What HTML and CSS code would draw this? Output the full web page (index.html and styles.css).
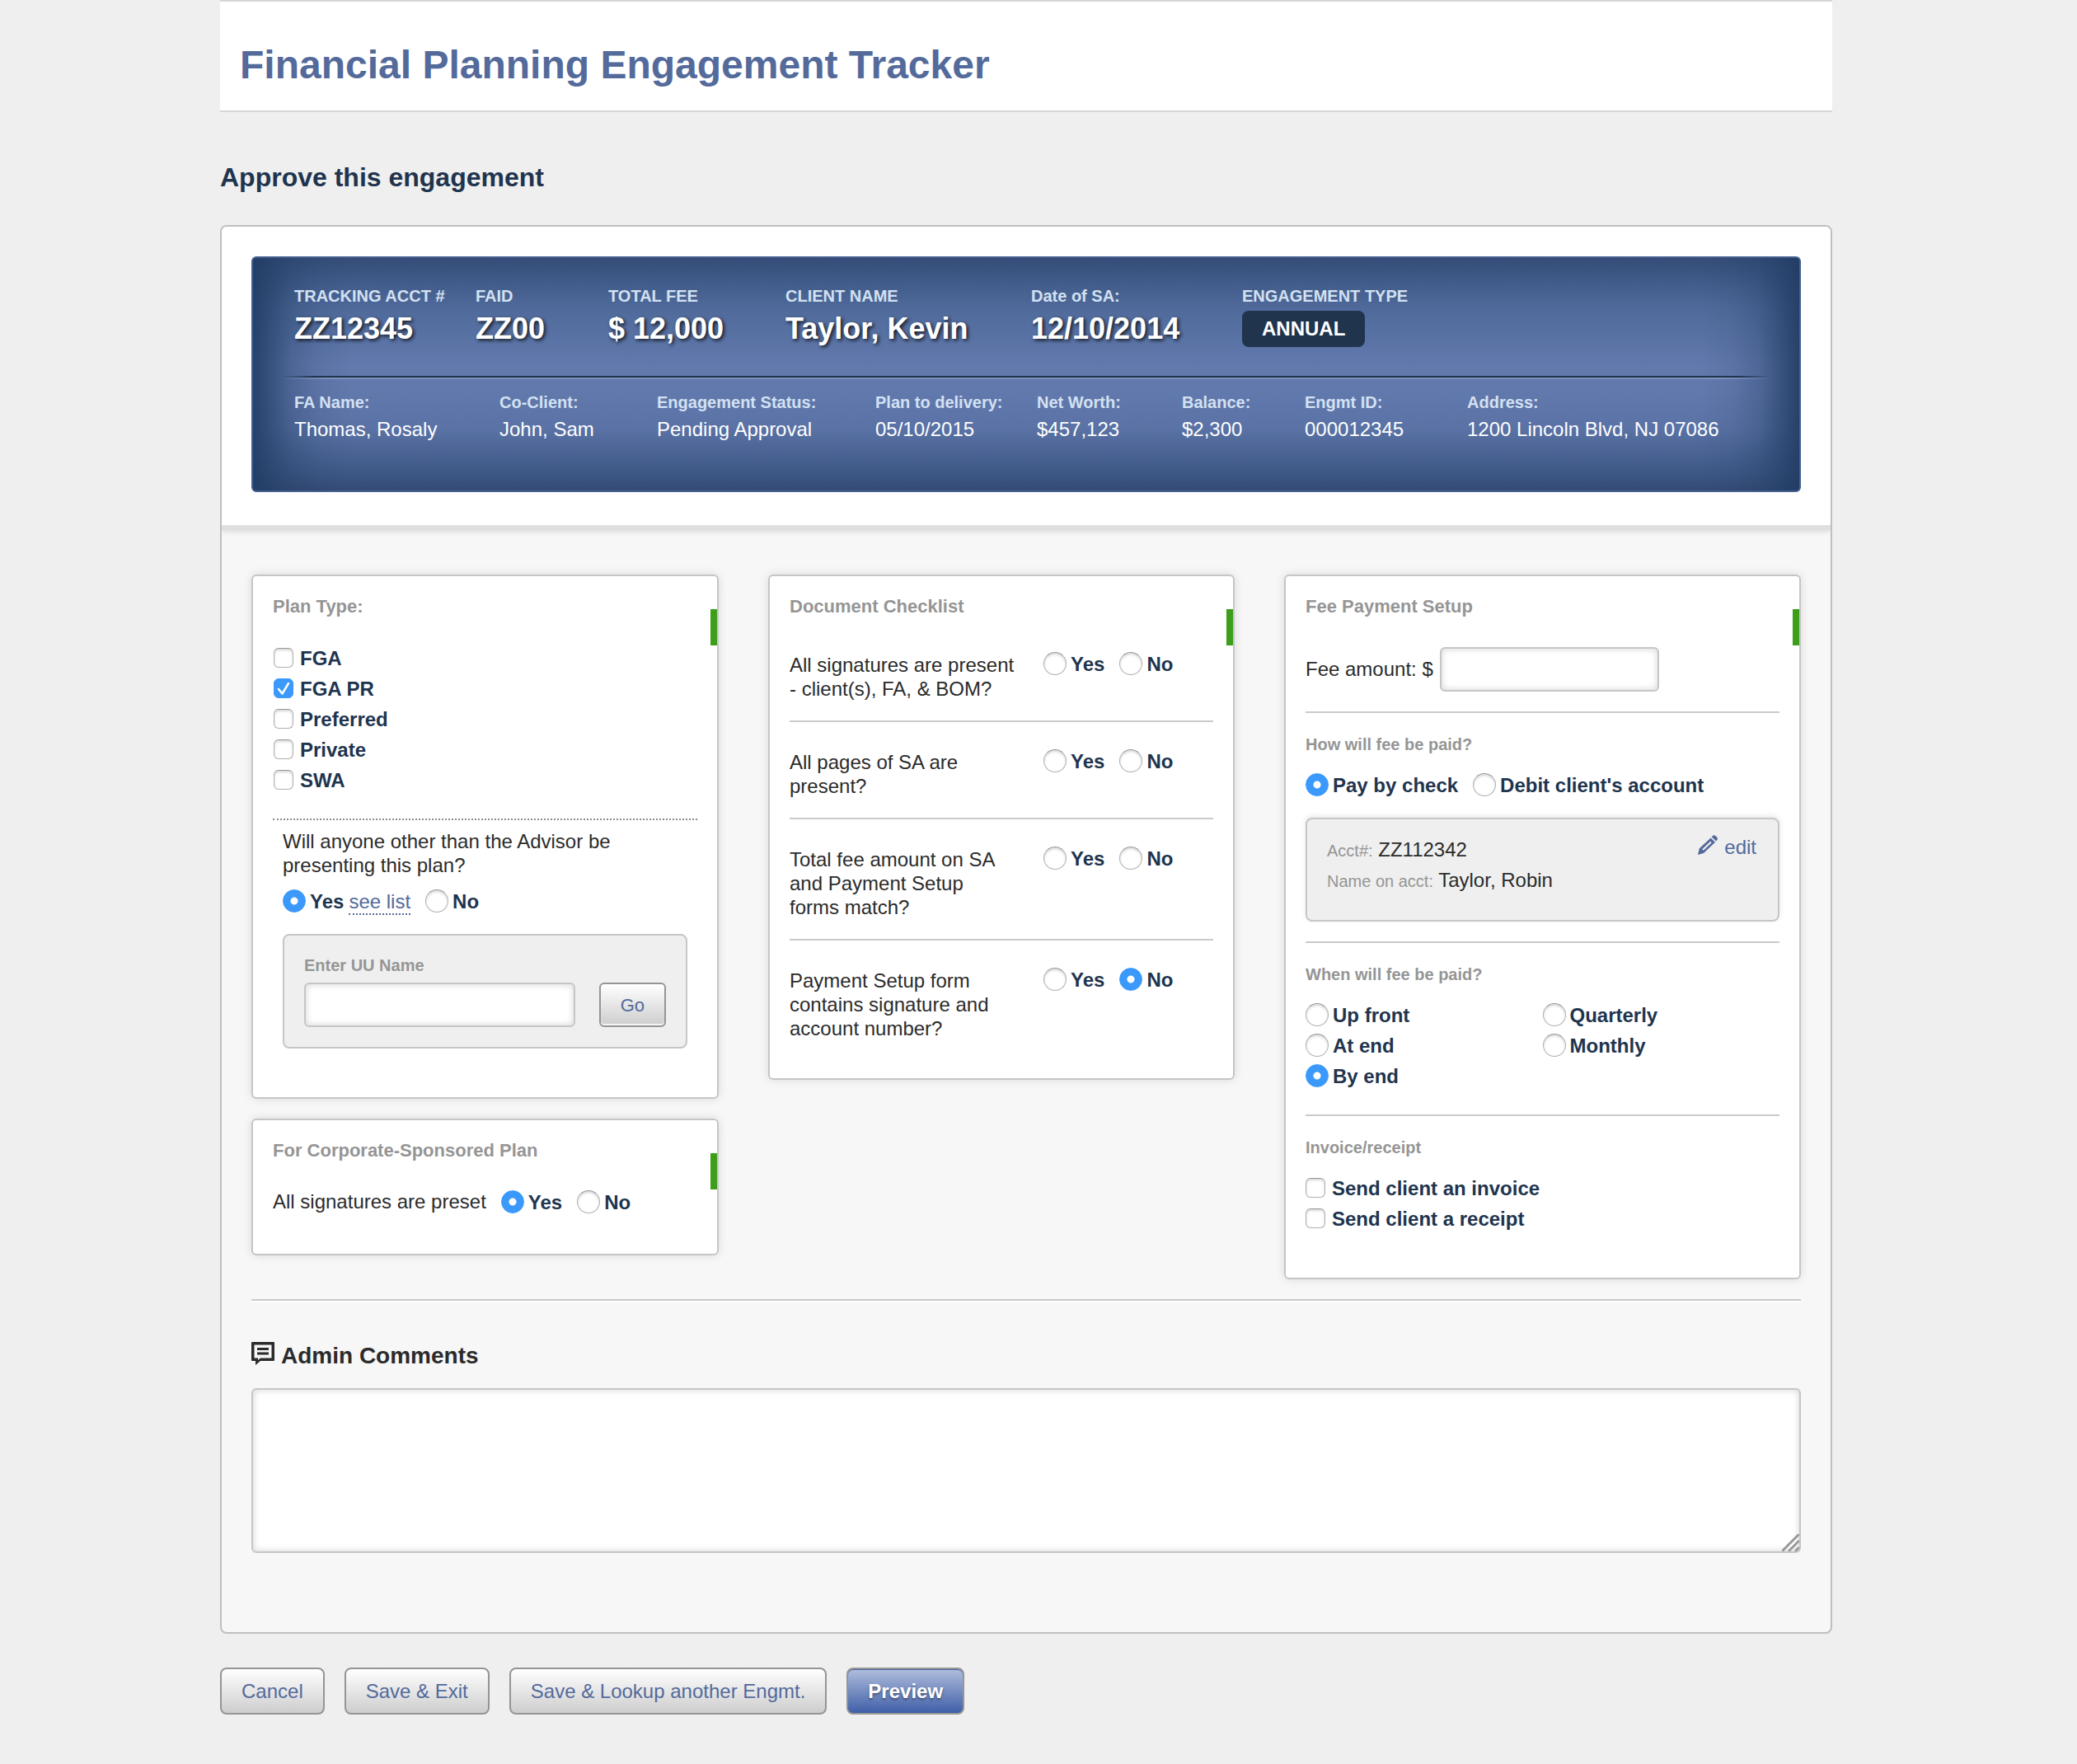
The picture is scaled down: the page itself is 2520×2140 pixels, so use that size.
FILE: index.html
```html
<!DOCTYPE html>
<html lang="en">
<head>
<meta charset="utf-8">
<meta name="viewport" content="width=device-width, initial-scale=1">
<title>Financial Planning Engagement Tracker</title>
<link rel="stylesheet" href="styles.css">
</head>
<body>
<div class="page">
  <header class="masthead">
    <h1 class="masthead-title">Financial Planning Engagement Tracker</h1>
  </header>

  <main>
    <h2 class="page-title">Approve this engagement</h2>

    <form class="panel">
      <div class="panel-head">
        <section class="summary">
          <dl class="facts facts-main">
            <div class="fact"><dt>TRACKING ACCT #</dt><dd>ZZ12345</dd></div>
            <div class="fact"><dt>FAID</dt><dd>ZZ00</dd></div>
            <div class="fact"><dt>TOTAL FEE</dt><dd>$ 12,000</dd></div>
            <div class="fact"><dt>CLIENT NAME</dt><dd>Taylor, Kevin</dd></div>
            <div class="fact"><dt>Date of SA:</dt><dd>12/10/2014</dd></div>
            <div class="fact"><dt>ENGAGEMENT TYPE</dt><dd class="pill">ANNUAL</dd></div>
          </dl>
          <div class="summary-rule"></div>
          <dl class="facts facts-detail">
            <div class="fact"><dt>FA Name:</dt><dd>Thomas, Rosaly</dd></div>
            <div class="fact"><dt>Co-Client:</dt><dd>John, Sam</dd></div>
            <div class="fact"><dt>Engagement Status:</dt><dd>Pending Approval</dd></div>
            <div class="fact"><dt>Plan to delivery:</dt><dd>05/10/2015</dd></div>
            <div class="fact"><dt>Net Worth:</dt><dd>$457,123</dd></div>
            <div class="fact"><dt>Balance:</dt><dd>$2,300</dd></div>
            <div class="fact"><dt>Engmt ID:</dt><dd>000012345</dd></div>
            <div class="fact"><dt>Address:</dt><dd>1200 Lincoln Blvd, NJ 07086</dd></div>
          </dl>
        </section>
      </div>

      <div class="panel-body">
        <div class="columns">
          <div class="column">
            <section class="card card-plan">
              <h3 class="card-title">Plan Type:</h3>
              <div class="choices">
                <label class="choice"><input class="check" type="checkbox" name="plan"><span>FGA</span></label>
                <label class="choice"><input class="check" type="checkbox" name="plan" checked><span>FGA PR</span></label>
                <label class="choice"><input class="check" type="checkbox" name="plan"><span>Preferred</span></label>
                <label class="choice"><input class="check" type="checkbox" name="plan"><span>Private</span></label>
                <label class="choice"><input class="check" type="checkbox" name="plan"><span>SWA</span></label>
              </div>
              <div class="presenter">
                <p class="question">Will anyone other than the Advisor be presenting this plan?</p>
                <div class="answers">
                  <div class="choice-with-link">
                    <label class="choice"><input class="radio" type="radio" name="other" checked><span>Yes</span></label>
                    <a class="see-list" href="#">see list</a>
                  </div>
                  <label class="choice"><input class="radio" type="radio" name="other"><span>No</span></label>
                </div>
                <div class="well lookup">
                  <div class="lookup-field">
                    <label class="small-title" for="uu-name">Enter UU Name</label>
                    <input class="field" type="text" id="uu-name">
                  </div>
                  <button class="button button-go" type="button">Go</button>
                </div>
              </div>
            </section>

            <section class="card card-corporate">
              <h3 class="card-title">For Corporate-Sponsored Plan</h3>
              <div class="answers">
                <span>All signatures are preset</span>
                <label class="choice"><input class="radio" type="radio" name="corp" checked><span>Yes</span></label>
                <label class="choice"><input class="radio" type="radio" name="corp"><span>No</span></label>
              </div>
            </section>
          </div>

          <div class="column">
            <section class="card card-checklist">
              <h3 class="card-title">Document Checklist</h3>
              <div class="check-row">
                <p class="question">All signatures are present - client(s), FA, &amp; BOM?</p>
                <div class="answers">
                  <label class="choice"><input class="radio" type="radio" name="d1"><span>Yes</span></label>
                  <label class="choice"><input class="radio" type="radio" name="d1"><span>No</span></label>
                </div>
              </div>
              <div class="check-row">
                <p class="question">All pages of SA are present?</p>
                <div class="answers">
                  <label class="choice"><input class="radio" type="radio" name="d2"><span>Yes</span></label>
                  <label class="choice"><input class="radio" type="radio" name="d2"><span>No</span></label>
                </div>
              </div>
              <div class="check-row">
                <p class="question">Total fee amount on SA and Payment Setup forms match?</p>
                <div class="answers">
                  <label class="choice"><input class="radio" type="radio" name="d3"><span>Yes</span></label>
                  <label class="choice"><input class="radio" type="radio" name="d3"><span>No</span></label>
                </div>
              </div>
              <div class="check-row">
                <p class="question">Payment Setup form contains signature and account number?</p>
                <div class="answers">
                  <label class="choice"><input class="radio" type="radio" name="d4"><span>Yes</span></label>
                  <label class="choice"><input class="radio" type="radio" name="d4" checked><span>No</span></label>
                </div>
              </div>
            </section>
          </div>

          <div class="column">
            <section class="card card-fee">
              <h3 class="card-title">Fee Payment Setup</h3>
              <div class="fee-amount">
                <label for="fee">Fee amount: $</label>
                <input class="field field-fee" type="text" id="fee">
              </div>

              <div class="fee-section">
                <h4 class="small-title">How will fee be paid?</h4>
                <div class="answers">
                  <label class="choice"><input class="radio" type="radio" name="how" checked><span>Pay by check</span></label>
                  <label class="choice"><input class="radio" type="radio" name="how"><span>Debit client's account</span></label>
                </div>
                <div class="well account">
                  <div>
                    <p class="account-line"><span class="account-label">Acct#:</span> ZZ112342</p>
                    <p class="account-line"><span class="account-label">Name on acct:</span> Taylor, Robin</p>
                  </div>
                  <a class="edit" href="#">
                    <svg width="24" height="24" viewBox="0 0 24 24" aria-hidden="true">
                      <path fill="currentColor" fill-rule="evenodd" d="M15.600 3.400 21 8.800 7 22 0 24 1.800 16.300ZM15.200 7.800 5.200 17.200 6.700 18.700 16.700 9.300Z"/>
                      <path fill="currentColor" d="M16.700 2.200 18 1Q19.600-.4 21.400.9L23 2.500Q24.600 4.400 23.300 6L22.100 7.600Z"/>
                    </svg>
                    <span>edit</span>
                  </a>
                </div>
              </div>

              <div class="fee-section">
                <h4 class="small-title">When will fee be paid?</h4>
                <div class="schedule">
                  <div class="choices">
                    <label class="choice"><input class="radio" type="radio" name="when"><span>Up front</span></label>
                    <label class="choice"><input class="radio" type="radio" name="when"><span>At end</span></label>
                    <label class="choice"><input class="radio" type="radio" name="when" checked><span>By end</span></label>
                  </div>
                  <div class="choices">
                    <label class="choice"><input class="radio" type="radio" name="when"><span>Quarterly</span></label>
                    <label class="choice"><input class="radio" type="radio" name="when"><span>Monthly</span></label>
                  </div>
                </div>
              </div>

              <div class="fee-section">
                <h4 class="small-title">Invoice/receipt</h4>
                <div class="choices">
                  <label class="choice"><input class="check" type="checkbox" name="invoice"><span>Send client an invoice</span></label>
                  <label class="choice"><input class="check" type="checkbox" name="receipt"><span>Send client a receipt</span></label>
                </div>
              </div>
            </section>
          </div>
        </div>

        <section class="comments">
          <h3 class="comments-title">
            <svg width="28" height="28" viewBox="0 0 28 28" aria-hidden="true">
              <path fill="currentColor" fill-rule="evenodd" d="M0 1Q0 0 1 0H27Q28 0 28 1V22Q28 23 27 23H11L5 28V23H1Q0 23 0 22ZM3.500 3.500V19.500H8V22L11 19.500H24.500V3.500Z"/>
              <path fill="currentColor" d="M7 7H21V10H7ZM7 12.500H21V15.500H7Z"/>
            </svg>
            <label for="comments">Admin Comments</label>
          </h3>
          <div class="comments-box">
            <textarea class="field comments-field" id="comments"></textarea>
            <svg class="grip" width="21" height="21" viewBox="0 0 21 21" aria-hidden="true">
              <path fill="none" stroke="#999" stroke-width="3" d="M0 21 21 0M8 21 21 8M16 21 21 16"/>
            </svg>
          </div>
        </section>
      </div>
    </form>

    <div class="actions">
      <button class="button" type="button">Cancel</button>
      <button class="button" type="button">Save &amp; Exit</button>
      <button class="button" type="button">Save &amp; Lookup another Engmt.</button>
      <button class="button button-primary" type="button">Preview</button>
    </div>
  </main>
</div>
</body>
</html>
```
FILE: styles.css
```css
*,
*::before,
*::after {
  box-sizing: border-box;
}

body {
  margin: 0;
  background: #efefef;
  color: #2b2b2b;
  font: 24px/29px "Liberation Sans", Arial, Helvetica, sans-serif;
}

h1, h2, h3, h4, p, dl, dd {
  margin: 0;
}

button, input, textarea {
  font: inherit;
}

.page {
  margin: 0 297px 58px 267px;
}

/* Page header */

.masthead {
  padding: 49px 24px 27px;
  background: #fff;
  border-top: 2px solid #d6d6d6;
  border-bottom: 2px solid #d6d6d6;
}

.masthead-title {
  color: #536a9b;
  font-size: 48px;
  line-height: 56px;
}

.page-title {
  margin: 61px 0 40px;
  color: #20344e;
  font-size: 32px;
  line-height: 36px;
}

.panel {
  overflow: hidden;
  background: #f7f7f7;
  border: 2px solid #bfbfbf;
  border-radius: 8px;
}

.panel-head {
  padding: 36px 36px 40px;
  background: #fff;
  border-bottom: 6px solid #dfdfdf;
  box-shadow: 0 2px 6px rgba(0, 0, 0, 0.12);
}

/* Engagement summary */

.summary {
  padding: 34px 0 60px;
  border: 2px solid #445e90;
  border-radius: 6px;
  background:
    linear-gradient(90deg, rgba(32, 60, 99, 0.9) 0, rgba(32, 60, 99, 0.7) 16px, rgba(32, 60, 99, 0.3) 48px, rgba(32, 60, 99, 0.1) 80px, rgba(32, 60, 99, 0) 120px, rgba(32, 60, 99, 0) calc(100% - 120px), rgba(32, 60, 99, 0.1) calc(100% - 80px), rgba(32, 60, 99, 0.3) calc(100% - 48px), rgba(32, 60, 99, 0.7) calc(100% - 16px), rgba(32, 60, 99, 0.9) 100%),
    linear-gradient(#354d77 0, #3c5784 20px, #4f6a9a 60px, #6279ad 130px, #6279ad 160px, #5a72a5 206px, #3d5785 262px, #344b74 100%);
}

.facts {
  display: grid;
  padding: 0 50px;
}

.facts-main {
  grid-template-columns: 220fr 161fr 215fr 298fr 256fr 626fr;
}

.facts-detail {
  grid-template-columns: 249fr 191fr 265fr 196fr 176fr 149fr 197fr 353fr;
}

.fact dt {
  margin-bottom: 6px;
  color: #d3e1f2;
  font-size: 20px;
  font-weight: bold;
  line-height: 24px;
}

.fact dd {
  color: #fff;
  line-height: 29px;
  white-space: nowrap;
}

.facts-main dd {
  font-size: 36px;
  font-weight: bold;
  line-height: 44px;
  text-shadow: 2px 2px 4px rgba(0, 0, 0, 0.8);
}

.facts-main .pill {
  width: max-content;
  padding: 0 24px;
  background: #20344e;
  border-radius: 8px;
  font-size: 24px;
  text-shadow: none;
}

.summary-rule {
  height: 4px;
  margin: 35px 34px 16px;
  background:
    linear-gradient(90deg, rgba(32, 52, 78, 0), #20344e 40px, #20344e calc(100% - 40px), rgba(32, 52, 78, 0)) top / 100% 2px no-repeat,
    linear-gradient(90deg, rgba(126, 145, 188, 0), #7e91bc 60px, #7e91bc calc(100% - 60px), rgba(126, 145, 188, 0)) bottom / 100% 2px no-repeat;
}

/* Cards */

.panel-body {
  padding: 54px 36px 96px;
}

.columns {
  display: grid;
  grid-template-columns: 567fr 566fr 627fr;
  align-items: start;
  column-gap: 60px;
}

.column {
  display: grid;
  gap: 24px;
}

.card {
  position: relative;
  padding: 24px;
  background: #fff;
  border: 2px solid #c6c6c6;
  border-radius: 6px;
  box-shadow: 0 0 12px rgba(0, 0, 0, 0.12);
}

.card::after {
  content: "";
  position: absolute;
  top: 40px;
  right: 0;
  width: 8px;
  height: 44px;
  background: #3d9f19;
}

.card-plan {
  padding-bottom: 59px;
}

.card-corporate {
  padding-bottom: 45px;
}

.card-checklist {
  padding-bottom: 22px;
}

.card-fee {
  padding-bottom: 54px;
}

.card-title {
  margin-bottom: 30px;
  color: #959595;
  font-size: 22px;
  line-height: 26px;
}

.small-title {
  color: #959595;
  font-size: 20px;
  font-weight: bold;
  line-height: 24px;
}

/* Radio buttons and tick boxes */

.choices {
  display: flex;
  flex-direction: column;
  align-items: flex-start;
}

.choice {
  display: flex;
  align-items: center;
  height: 37px;
  color: #20344e;
  font-weight: bold;
}

.choice span {
  padding-top: 2px;
}

.answers {
  display: flex;
  align-items: center;
  gap: 18px;
}

.radio,
.check {
  flex: none;
  appearance: none;
  background: #fff;
  border: 1px solid #b0b0b0;
  border-top-color: #999;
  box-shadow: inset 0 2px 3px rgba(0, 0, 0, 0.16);
}

.radio {
  width: 28px;
  height: 28px;
  margin: 0 5px 0 0;
  border-radius: 50%;
}

.check {
  width: 24px;
  height: 24px;
  margin: 0 8px 0 1px;
  border-radius: 6px;
}

.radio:checked {
  background: radial-gradient(circle, #fff 4px, #3b99fc 5px);
  border-color: #3b99fc;
  box-shadow: none;
}

.check:checked {
  background: #3b99fc url("data:image/svg+xml,%3Csvg xmlns='http://www.w3.org/2000/svg' viewBox='0 0 24 24'%3E%3Cpath d='M6 13 10.500 18.500 18 6' fill='none' stroke='white' stroke-width='2.500' stroke-linecap='round' stroke-linejoin='round'/%3E%3C/svg%3E") center / 24px 24px no-repeat;
  border-color: #3b99fc;
  box-shadow: none;
}

/* Fields and buttons */

.field {
  display: block;
  width: 100%;
  height: 54px;
  padding: 0 12px;
  background: #fff;
  border: 2px solid #c6c6c6;
  border-radius: 6px;
  box-shadow: inset 0 0 8px rgba(0, 0, 0, 0.18);
}

.button {
  height: 57px;
  padding: 0 24px;
  background: linear-gradient(#fff, #cdcdcd);
  border: 2px solid #959595;
  border-radius: 8px;
  color: #536a9b;
  line-height: 29px;
}

.button-go {
  height: 54px;
  border-radius: 6px;
  box-shadow: inset 0 -2px 0 #f4f4f4;
  font-size: 22px;
}

.button-primary {
  background: linear-gradient(#b0bddc, #3f5fa8);
  box-shadow: inset 0 1px 0 #4663a6;
  color: #fff;
  font-weight: bold;
  text-shadow: 0 2px 3px rgba(0, 0, 0, 0.4);
}

.well {
  display: flex;
  justify-content: space-between;
  margin-top: 22px;
  padding: 24px;
  background: #efefef;
  border: 2px solid #c6c6c6;
  border-radius: 8px;
}

/* Plan type */

.presenter {
  margin-top: 29px;
  padding: 11px 12px 0;
  border-top: 2px dotted #8c8c8c;
}

.presenter .question {
  margin-bottom: 10px;
}

.choice-with-link {
  display: flex;
  align-items: center;
  gap: 6px;
}

.see-list {
  margin-top: 4px;
  border-bottom: 2px dotted #536a9b;
  color: #536a9b;
  text-decoration: none;
}

.lookup {
  align-items: flex-end;
  gap: 29px;
}

.lookup-field {
  flex: 1;
}

.lookup-field .small-title {
  display: block;
  margin-bottom: 9px;
}

/* Document checklist */

.check-row {
  display: grid;
  grid-template-columns: 274fr 206fr;
  align-items: start;
  column-gap: 34px;
  padding: 34px 0 24px;
  border-bottom: 2px solid #cacaca;
}

.card-title + .check-row {
  padding-top: 13px;
}

.check-row:last-child {
  border-bottom: 0;
}

.check-row .answers {
  margin-top: -6px;
}

/* Fee payment */

.fee-amount {
  display: flex;
  align-items: center;
  gap: 8px;
  padding: 6px 0 24px;
}

.fee-amount label {
  padding-bottom: 2px;
}

.field-fee {
  width: 266px;
}

.fee-section {
  padding: 26px 0 24px;
  border-top: 2px solid #cacaca;
}

.fee-section:last-child {
  padding-bottom: 0;
}

.fee-section .small-title {
  margin-bottom: 18px;
}

.fee-section .check {
  margin-left: 0;
}

.account {
  min-height: 126px;
  padding: 19px 26px 16px 24px;
  box-shadow: 0 -2px 6px rgba(0, 0, 0, 0.1);
}

.account-line {
  line-height: 36px;
}

.account-label {
  color: #959595;
  font-size: 20px;
}

.edit {
  display: flex;
  align-items: center;
  gap: 8px;
  height: 24px;
  color: #536a9b;
  text-decoration: none;
}

.edit span {
  padding-top: 4px;
}

.schedule {
  display: grid;
  grid-template-columns: 1fr 1fr;
  padding-bottom: 5px;
}

/* Comments */

.comments {
  margin-top: 24px;
  padding-top: 50px;
  border-top: 2px solid #cacaca;
  box-shadow: inset 0 2px 0 #fff;
}

.comments-title {
  display: flex;
  align-items: flex-start;
  gap: 8px;
  margin-bottom: 23px;
  font-size: 28px;
  line-height: 32px;
}

.comments-title label {
  padding-top: 1px;
}

.comments-box {
  position: relative;
}

.comments-field {
  height: 200px;
  padding: 12px;
  resize: none;
}

.grip {
  position: absolute;
  right: 2px;
  bottom: 2px;
}

.actions {
  display: flex;
  gap: 24px;
  margin-top: 41px;
}
```
